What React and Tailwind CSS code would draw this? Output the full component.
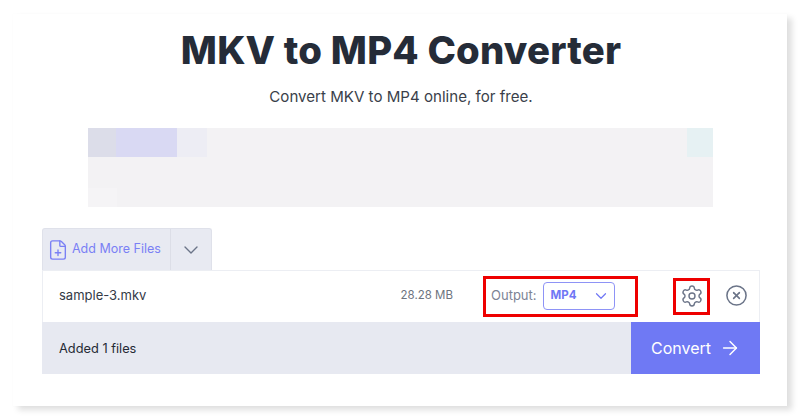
import React from "react";
import { Settings, ChevronDown, ArrowRight, FilePlus, CircleX } from "lucide-react";

export default function App() {
  return (
    <div className="w-[800px] h-[419px] bg-white overflow-hidden font-['Inter',sans-serif]">
      <div className="mt-[14px] ml-[13px] w-[774px] h-[392px] bg-white shadow-[5px_4px_6px_rgba(0,0,0,0.13),0_0_2px_rgba(0,0,0,0.02)] flex flex-col items-center">
        <h1 className="mt-[13px] ml-[2px] h-[46px] leading-[46px] text-[38.3px] font-extrabold text-[#252c38] tracking-[0.2px] whitespace-nowrap">
          MKV to MP4 Converter
        </h1>
        <p className="mt-[13px] ml-[2px] h-[22px] leading-[22px] text-[15.1px] text-[#3a3f4a] whitespace-nowrap">
          Convert MKV to MP4 online, for free.
        </p>
        <div className="mt-[20px] w-[625px] h-[79px] bg-[#f3f2f4] flex flex-col justify-between">
          <div className="h-[29px] flex">
            <div className="w-[28px] bg-[#dcdde9]"></div>
            <div className="w-[61px] bg-[#d9d9f3]"></div>
            <div className="w-[30px] bg-[#ededf4]"></div>
            <div className="flex-1"></div>
            <div className="w-[26px] bg-[#e6f1f3]"></div>
          </div>
          <div className="h-[19px] w-[29px] bg-[#f5f4f6]"></div>
        </div>
        <div className="mt-[21px] ml-[2px] w-[718px] flex flex-col">
          <div className="h-[42px] w-[170px] flex bg-[#e8eaf2] border border-b-0 border-[#dfe1ea] rounded-t-[3px] box-border">
            <div className="w-[128px] flex items-center gap-[3px] pl-[4px] border-r border-[#dcdee7]">
              <FilePlus size={22} strokeWidth={1.5} className="text-[#7a80f5] shrink-0" />
              <span className="text-[12.5px] text-[#7a80f5] whitespace-nowrap">Add More Files</span>
            </div>
            <div className="flex-1 flex items-center justify-center">
              <ChevronDown size={24} strokeWidth={1.4} className="text-[#6b7488]" />
            </div>
          </div>
          <div className="h-[52px] flex items-center border border-b-0 border-[#eceef3] bg-white">
            <span className="ml-[16px] mb-[2px] w-[323px] text-[13px] text-[#343a46]">sample-3.mkv</span>
            <span className="w-[71px] mb-[2px] text-right text-[11.5px] text-[#6d7480]">28.28 MB</span>
            <div className="ml-[30px] mb-[1px] w-[155px] h-[41px] border-[3px] border-[#ee0000] flex items-center pl-[5px] gap-[6px] box-border">
              <span className="text-[13px] text-[#7c8395]">Output:</span>
              <div className="w-[72px] h-[28px] border border-[#8e93f6] rounded-[4px] flex items-center justify-between pl-[7px] pr-[4px] box-border">
                <span className="text-[11.5px] font-bold text-[#7077f5]">MP4</span>
                <ChevronDown size={18} strokeWidth={1.6} className="text-[#7077f5]" />
              </div>
            </div>
            <div className="ml-[35px] mb-[1px] w-[37px] h-[37px] border-[3px] border-[#ee0000] flex items-center justify-center box-border">
              <Settings size={24} strokeWidth={1.4} className="text-[#6b7488]" />
            </div>
            <CircleX size={23} strokeWidth={1.6} className="ml-[15px] mb-[2px] text-[#6b7488]" />
          </div>
          <div className="h-[52px] flex items-center justify-between bg-[#e7e9f1]">
            <span className="ml-[17px] mt-[2px] text-[12.8px] text-[#252a35]">Added 1 files</span>
            <div className="w-[129px] h-full bg-[#6f79f4] flex items-center justify-center gap-[8px] pb-[1px] pl-[1px]">
              <span className="text-[16px] text-white">Convert</span>
              <ArrowRight size={22} strokeWidth={1.6} className="text-white" />
            </div>
          </div>
        </div>
      </div>
    </div>
  );
}
